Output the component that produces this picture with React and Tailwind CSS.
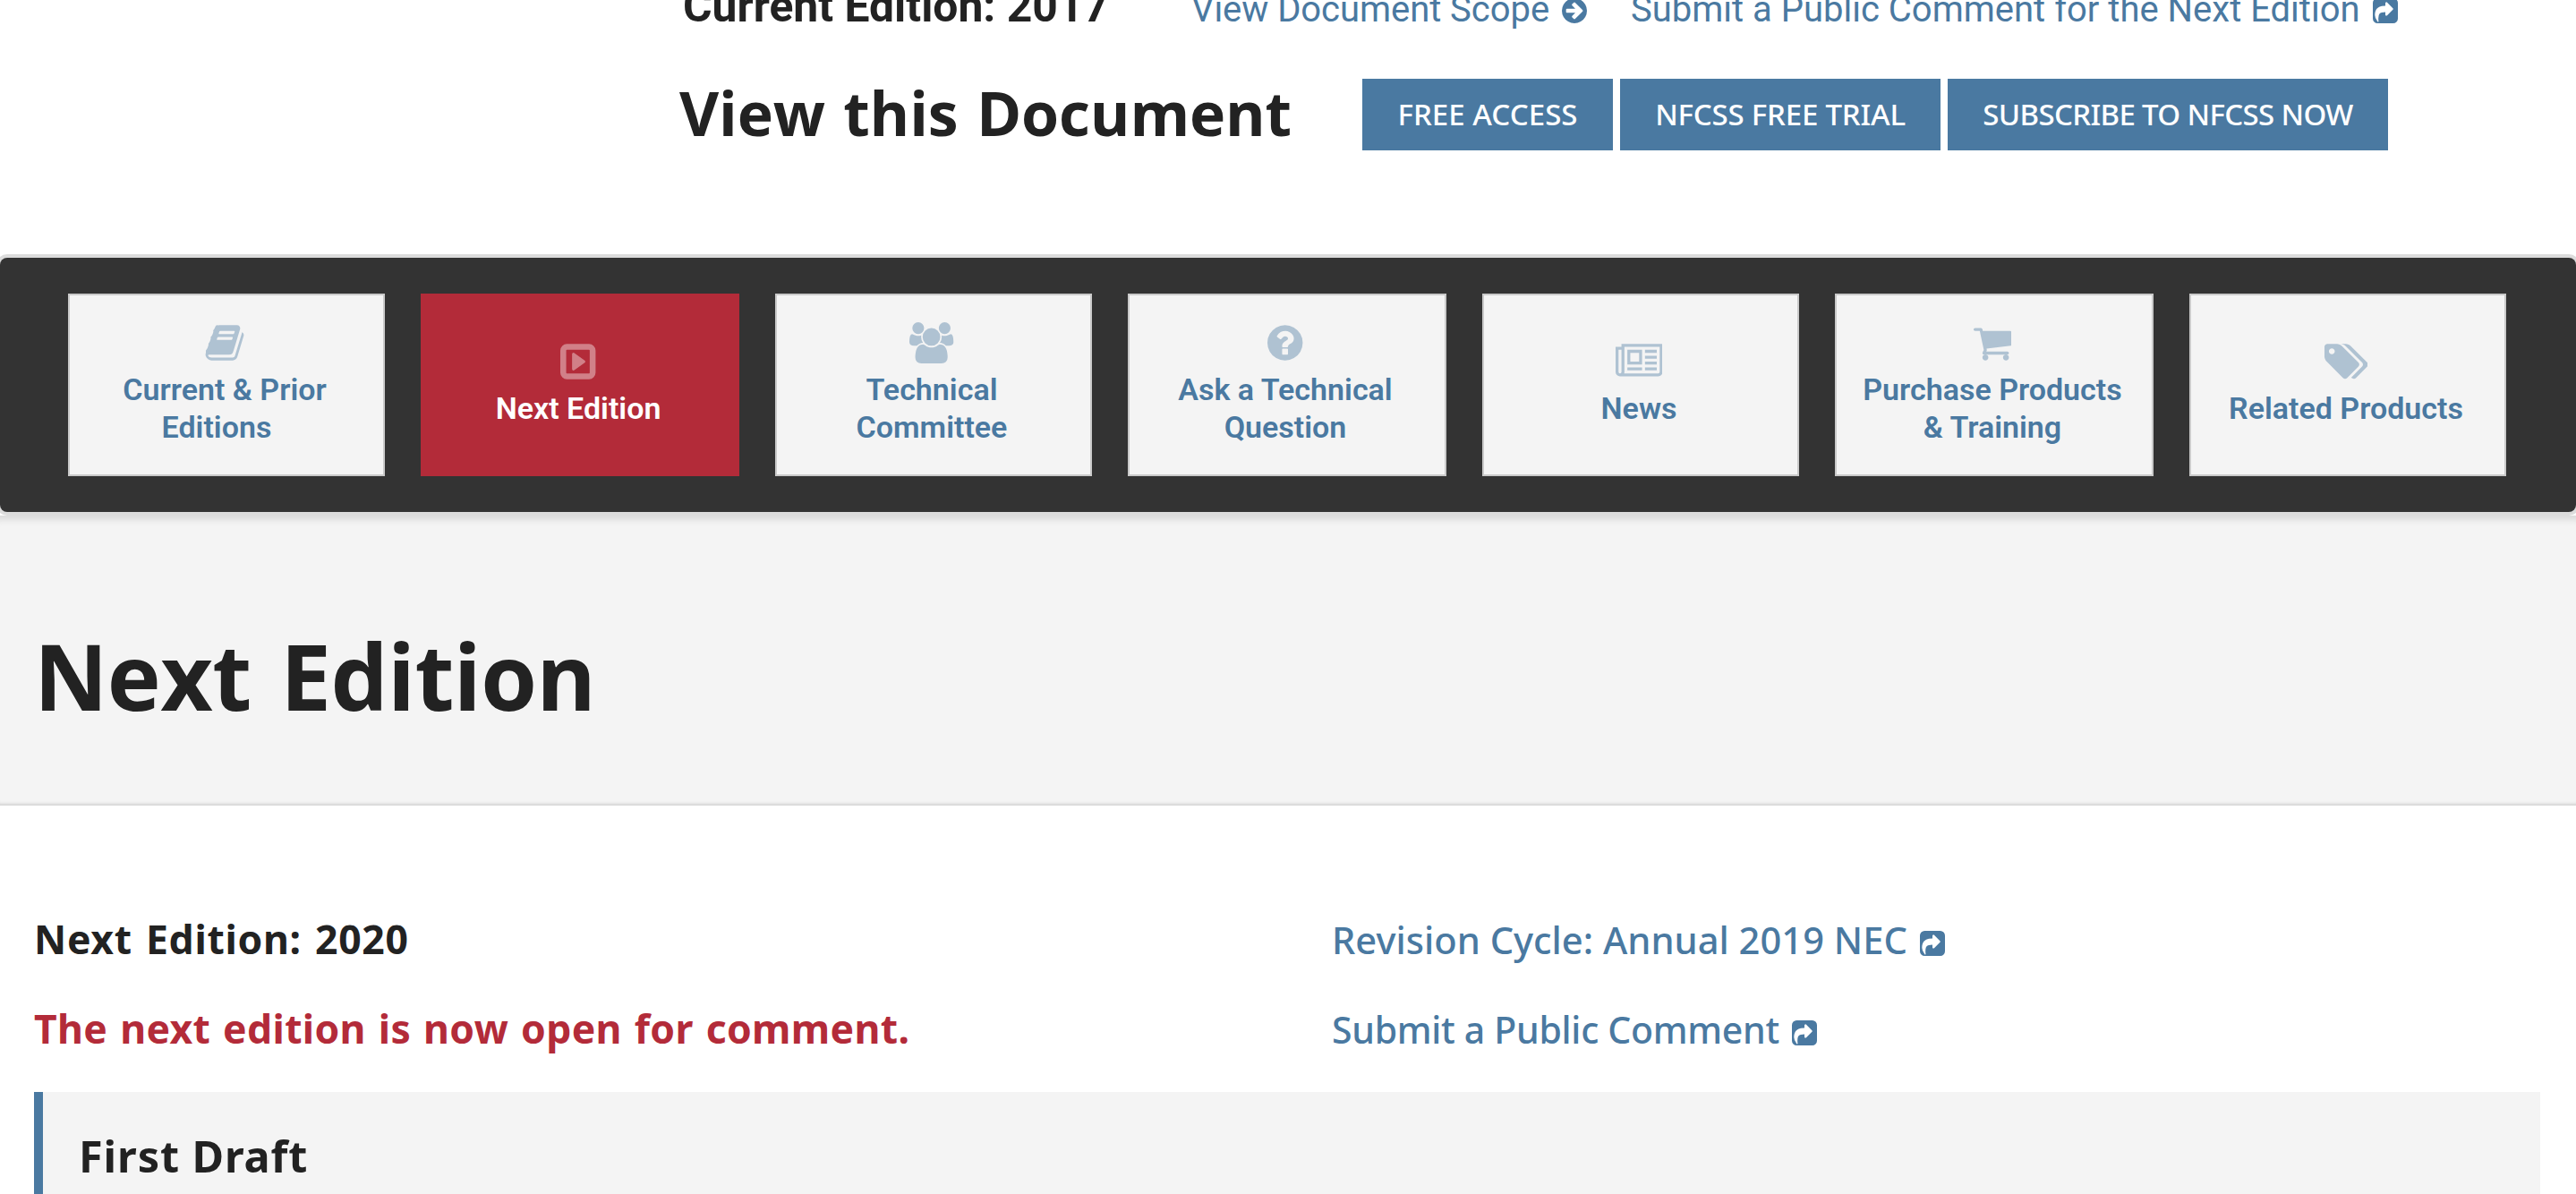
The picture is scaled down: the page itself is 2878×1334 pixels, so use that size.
import React from "react";

const PATHS = {
  arrow:
    "M1413 896q0-27-18-45l-91-91-362-362q-18-18-45-18t-45 18l-91 91q-18 18-18 45t18 45l189 189h-502q-26 0-45 19t-19 45v128q0 26 19 45t45 19h502l-189 189q-18 18-18 45t18 45l91 91q18 18 45 18t45-18l362-362 91-91q18-18 18-45zm251 0q0 209-103 385.5t-279.5 279.5-385.5 103-385.5-103-279.5-279.5-103-385.5 103-385.5 279.5-279.5 385.5-103 385.5 103 279.5 279.5 103 385.5z",
  share:
    "M1005 1181l352-352q19-19 19-45t-19-45l-352-352q-30-31-70-14-39 17-39 59v160q-119 0-216 19.5t-162.5 51-114 79-76.5 95.5-44.5 109-21.5 111.5-5 110.5q0 181 167 404 11 12 25 12 7 0 13-3 22-9 19-33-44-354 62-473 46-52 130-75.5t224-23.5v160q0 42 39 59 13 5 25 5 26 0 45-19zm659-765v960q0 119-84.5 203.5t-203.5 84.5h-960q-119 0-203.5-84.5t-84.5-203.5v-960q0-119 84.5-203.5t203.5-84.5h960q119 0 203.5 84.5t84.5 203.5z",
  book:
    "M1703 478q40 57 18 129l-275 906q-19 64-76.5 107.5t-122.5 43.5h-923q-77 0-148.5-53.5t-99.5-131.5q-24-67-2-127 0-4 3-27t4-37q1-8-3-21.5t-3-19.5q2-11 8-21t16.5-23.5 16.5-23.5q23-38 45-91.5t30-91.5q3-10 .5-30t-.5-28q3-11 17-28t17-23q21-36 42-92t25-90q1-9-2.5-32t.5-28q4-13 22-30.5t22-22.5q19-26 42.5-84.5t27.5-96.5q1-8-3-25.5t-2-26.5q2-8 9-18t18-23 17-21q8-12 16.5-30.5t15-35 16-36 19.5-32 26.5-23.5 36-11.5 47.5 5.5l-1 3q38-9 51-9h761q74 0 114 56t18 130l-274 906q-36 119-71.5 153.5t-128.5 34.5h-869q-27 0-38 15-11 16-1 43 24 70 144 70h923q29 0 56-15.5t35-41.5l300-987q7-22 5-57 38 15 59 43zm-1064 2q-4 13 2 22.5t20 9.5h608q13 0 25.5-9.5t16.5-22.5l21-64q4-13-2-22.5t-20-9.5h-608q-13 0-25.5 9.5t-16.5 22.5zm-83 256q-4 13 2 22.5t20 9.5h608q13 0 25.5-9.5t16.5-22.5l21-64q4-13-2-22.5t-20-9.5h-608q-13 0-25.5 9.5t-16.5 22.5z",
  next:
    "M1216 896q0 33-27 52l-448 320q-31 23-66 5-35-17-35-57v-640q0-40 35-57 35-18 66 5l448 320q27 19 27 52zm192 480v-960q0-14-9-23t-23-9h-960q-14 0-23 9t-9 23v960q0 14 9 23t23 9h960q14 0 23-9t9-23zm256-960v960q0 119-84.5 203.5t-203.5 84.5h-960q-119 0-203.5-84.5t-84.5-203.5v-960q0-119 84.5-203.5t203.5-84.5h960q119 0 203.5 84.5t84.5 203.5z",
  users:
    "M593 896q-162 5-265 128h-134q-82 0-138-40.5t-56-118.5q0-353 124-353 6 0 43.5 21t97.5 42.5 119 21.5q67 0 133-23-5 37-5 66 0 159 81 256zm1071 637q0 120-73 189.5t-194 69.5h-874q-121 0-194-69.5t-73-189.5q0-53 3.5-103.5t14-109 26.5-108.5 43-97.5 62-81 85.5-53.5 111.5-20q10 0 43 21.5t73 48 107 48 135 21.5 135-21.5 107-48 73-48 43-21.5q61 0 111.5 20t85.5 53.5 62 81 43 97.5 26.5 108.5 14 109 3.5 103.5zm-1024-1277q0 106-75 181t-181 75-181-75-75-181 75-181 181-75 181 75 75 181zm704 384q0 159-112.5 271.5t-271.5 112.5-271.5-112.5-112.5-271.5 112.5-271.5 271.5-112.5 271.5 112.5 112.5 271.5zm576 225q0 78-56 118.5t-138 40.5h-134q-103-123-265-128 81-97 81-256 0-29-5-66 66 23 133 23 59 0 119-21.5t97.5-42.5 43.5-21q124 0 124 353zm-128-609q0 106-75 181t-181 75-181-75-75-181 75-181 181-75 181 75 75 181z",
  question:
    "M1024 1376v-192q0-14-9-23t-23-9h-192q-14 0-23 9t-9 23v192q0 14 9 23t23 9h192q14 0 23-9t9-23zm256-672q0-88-55.5-163t-138.5-116-170-41q-243 0-371 213-15 24 8 42l132 100q7 6 19 6 16 0 25-12 53-68 86-92 34-24 86-24 48 0 85.5 26t37.5 59q0 38-20 61t-68 45q-63 28-115.5 86.5t-52.5 125.5v36q0 14 9 23t23 9h192q14 0 23-9t9-23q0-19 21.5-49.5t54.5-49.5q32-18 49-28.5t46-35 44.5-48 28-60.5 12.5-81zm384 192q0 209-103 385.5t-279.5 279.5-385.5 103-385.5-103-279.5-279.5-103-385.5 103-385.5 279.5-279.5 385.5-103 385.5 103 279.5 279.5 103 385.5z",
  news:
    "M1024 512h-384v384h384v-384zm128 640v128h-640v-128h640zm0-768v640h-640v-640h640zm640 768v128h-512v-128h512zm0-256v128h-512v-128h512zm0-256v128h-512v-128h512zm0-256v128h-512v-128h512zm-1536 960v-960h-128v960q0 26 19 45t45 19 45-19 19-45zm1664 0v-1088h-1536v1088q0 33-11 64h1483q26 0 45-19t19-45zm128-1216v1216q0 80-56 136t-136 56h-1664q-80 0-136-56t-56-136v-1088h256v-128h1792z",
  cart:
    "M704 1536q0 52-38 90t-90 38-90-38-38-90 38-90 90-38 90 38 38 90zm896 0q0 52-38 90t-90 38-90-38-38-90 38-90 90-38 90 38 38 90zm128-1088v512q0 24-16.5 42.5t-40.5 21.5l-1044 122q13 60 13 70 0 16-24 64h920q26 0 45 19t19 45-19 45-45 19h-1024q-26 0-45-19t-19-45q0-11 8-31.5t16-36 21.5-40 15.5-29.5l-177-823h-204q-26 0-45-19t-19-45 19-45 45-19h256q16 0 28.5 6.5t19.5 15.5 13 24.5 8 26 5.5 29.5 4.5 26h1201q26 0 45 19t19 45z",
  tags:
    "M448 448q0-53-37.5-90.5t-90.5-37.5-90.5 37.5-37.5 90.5 37.5 90.5 90.5 37.5 90.5-37.5 37.5-90.5zm1067 576q0 53-37 90l-491 492q-39 37-91 37-53 0-90-37l-715-716q-38-37-64.5-101t-26.5-117v-416q0-52 38-90t90-38h416q53 0 117 26.5t102 64.5l715 714q37 39 37 91zm384 0q0 53-37 90l-491 492q-39 37-91 37-36 0-59-14t-53-45l470-470q37-37 37-90 0-52-37-91l-715-714q-38-38-102-64.5t-117-26.5h224q53 0 117 26.5t102 64.5l715 714q37 39 37 91z",
};

function LinkIcon({ name }) {
  return (
    <svg
      viewBox="128 128 1536 1536"
      fill="currentColor"
      className="ml-[14px] inline-block h-[28px] w-[28px] align-[-2px]"
    >
      <path d={PATHS[name]} />
    </svg>
  );
}

const TABS = [
  { icon: "book", box: "0 0 1792 1792", lines: ["Current & Prior", "Editions"], last: "pr-[18px]" },
  { icon: "next", box: "128 0 1536 1792", lines: ["Next Edition"], active: true },
  { icon: "users", box: "0 0 1920 1792", lines: ["Technical", "Committee"] },
  { icon: "question", box: "128 0 1536 1792", lines: ["Ask a Technical", "Question"] },
  { icon: "news", box: "0 0 2048 1792", lines: ["News"] },
  { icon: "cart", box: "64 0 1664 1792", lines: ["Purchase Products", "& Training"] },
  { icon: "tags", box: "0 0 1899 1792", lines: ["Related Products"] },
];

function Tab({ tab }) {
  return (
    <a
      className={
        "flex h-[204px] flex-col items-center justify-center border-2 pr-[4px] pb-[2px] text-center " +
        (tab.active
          ? "border-[#b32b39] bg-[#b32b39] text-white"
          : "border-[#cacaca] bg-[#f4f4f4] text-[#4a79a1]")
      }
    >
      <svg viewBox={tab.box} fill="currentColor" className="mb-[8px] h-[46px] opacity-40">
        <path d={PATHS[tab.icon]} />
      </svg>
      {tab.lines.map((line, i) => (
        <span
          key={line}
          className={
            "block whitespace-nowrap font-['Roboto',sans-serif] text-[34px] leading-[42px] font-semibold " +
            (i === 1 && tab.last ? tab.last : "")
          }
        >
          {line}
        </span>
      ))}
    </a>
  );
}

function Button({ className, children }) {
  return (
    <a
      className={
        "flex h-[80px] items-center justify-center bg-[#4a79a1] pb-[1px] text-[33px] font-medium text-white " +
        className
      }
    >
      {children}
    </a>
  );
}

export default function App() {
  return (
    <div className="h-[1334px] w-[2878px] overflow-hidden bg-white font-['Noto_Sans','Open_Sans',sans-serif] whitespace-nowrap text-[#222222]">
      <header className="flex h-[288px] flex-col overflow-hidden">
        <div className="-mt-[23px] flex h-[60px] shrink-0 items-baseline pl-[763px] font-['Roboto',sans-serif] text-[40px] leading-[60px] text-[#4a79a1]">
          <div className="w-[568px] text-[49.8px] font-bold text-[#222222]">Current Edition: 2017</div>
          <a className="w-[491px] tracking-[-0.05px]">
            View Document Scope
            <LinkIcon name="arrow" />
          </a>
          <a>
            Submit a Public Comment for the Next Edition
            <LinkIcon name="share" />
          </a>
        </div>
        <div className="mt-[51px] flex h-[80px] shrink-0 items-center pl-[759px]">
          <h2 className="w-[763px] pb-[5px] font-['Open_Sans',sans-serif] text-[68px] leading-[80px] font-bold tracking-[-0.15px] [word-spacing:3px]">
            View this Document
          </h2>
          <div className="flex gap-[8px]">
            <Button className="w-[280px] tracking-[0.05px]">FREE ACCESS</Button>
            <Button className="w-[358px] tracking-[-0.2px]">NFCSS FREE TRIAL</Button>
            <Button className="w-[492px] tracking-[-0.65px]">SUBSCRIBE TO NFCSS NOW</Button>
          </div>
        </div>
      </header>

      <nav className="relative z-10 grid h-[284px] grid-cols-[354px_356px_354px_356px_354px_356px_354px] gap-[40px] rounded-[8px] bg-[#333333] py-[40px] pl-[76px] shadow-[0_0_0_4px_#dcdcdc]">
        {TABS.map((tab) => (
          <Tab key={tab.icon} tab={tab} />
        ))}
      </nav>

      <section className="mt-[4px] h-[324px] bg-[#f4f4f4] pt-[105px] pl-[38px] shadow-[inset_0_12px_8px_-8px_rgba(0,0,0,0.12),inset_0_-5px_4px_-4px_rgba(0,0,0,0.2)]">
        <h1 className="font-['Open_Sans',sans-serif] text-[101.4px] leading-[148px] font-bold tracking-[-0.6px] [word-spacing:7px]">
          Next Edition
        </h1>
      </section>

      <main className="pt-[99px] pr-[40px] pl-[38px]">
        <div className="flex h-[100px] items-baseline text-[44.5px] leading-[100px]">
          <h3 className="w-[1450px] font-bold tracking-[0.7px] [word-spacing:3px]">Next Edition: 2020</h3>
          <a className="text-[41.7px] font-medium text-[#4a79a1]">
            Revision Cycle: Annual 2019 NEC
            <LinkIcon name="share" />
          </a>
        </div>
        <div className="flex h-[100px] items-baseline text-[44.5px] leading-[100px]">
          <h3 className="w-[1450px] font-bold tracking-[0.35px] [word-spacing:2px] text-[#b32b39]">
            The next edition is now open for comment.
          </h3>
          <a className="text-[41px] font-medium tracking-[-0.3px] text-[#4a79a1]">
            Submit a Public Comment
            <LinkIcon name="share" />
          </a>
        </div>
        <div className="mt-[21px] h-[200px] border-l-[10px] border-[#4a79a1] bg-[#f4f4f4] pt-[31px] pl-[40px]">
          <h4 className="text-[48.6px] leading-[80px] font-bold tracking-[0.9px]">First Draft</h4>
        </div>
      </main>
    </div>
  );
}
